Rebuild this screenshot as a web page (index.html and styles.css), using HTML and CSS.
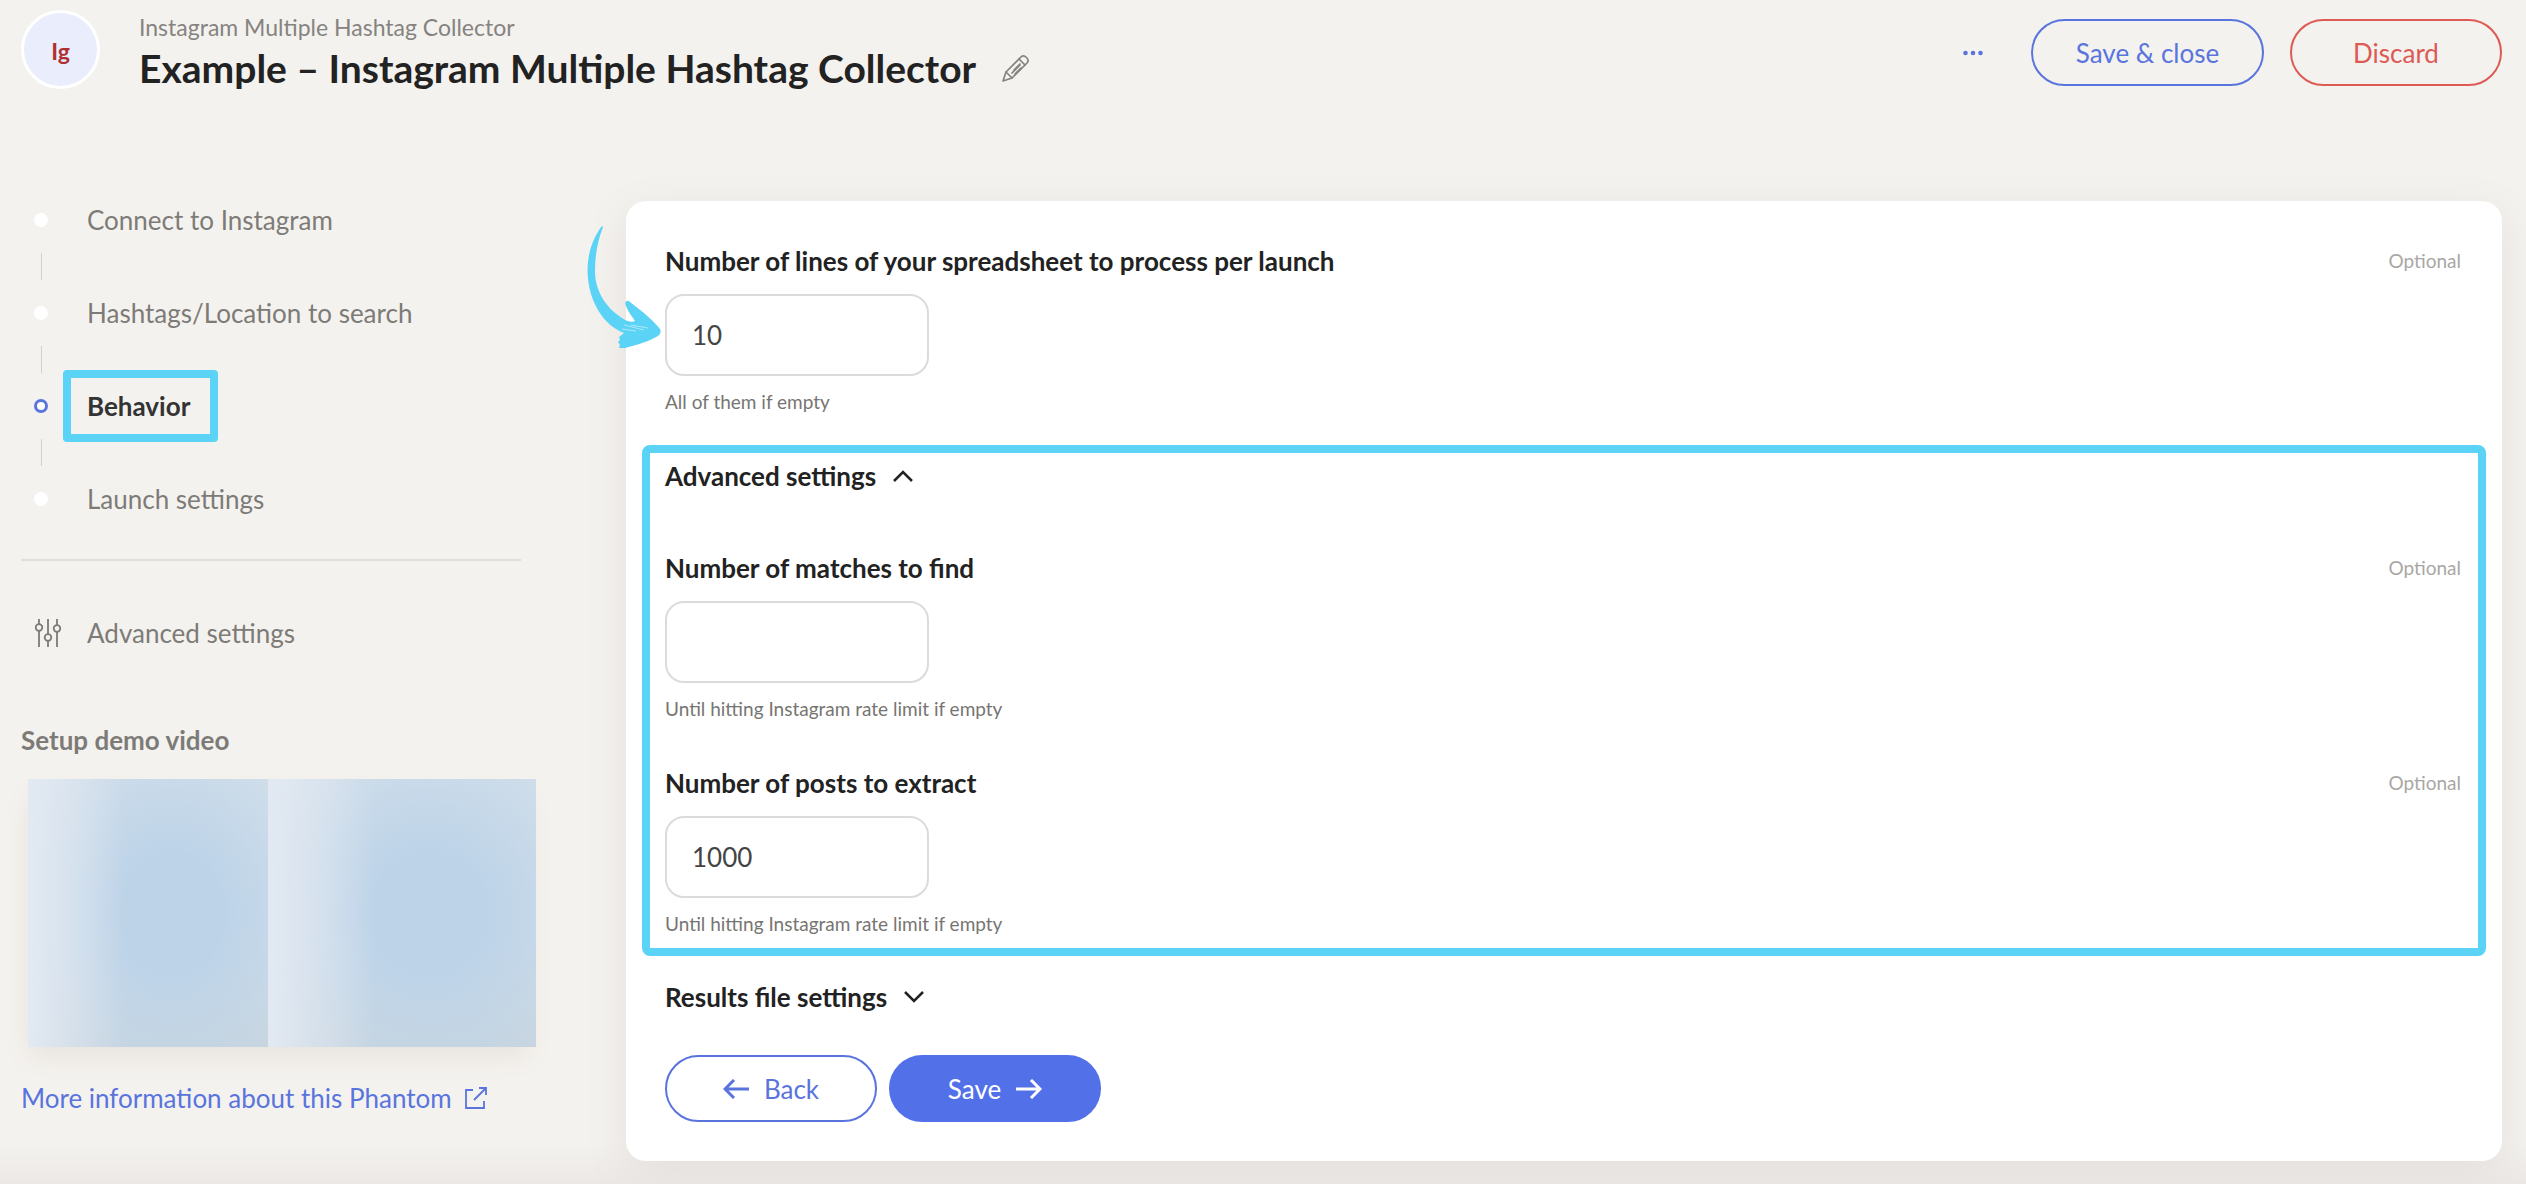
FILE: index.html
```
<!DOCTYPE html>
<html lang="en">

<head>
    <meta charset="UTF-8">
    <title>Example - Instagram Multiple Hashtag Collector</title>
    <link rel="stylesheet" href="styles.css">
</head>

<body>
    <header class="header">
        <div class="avatar">Ig</div>
        <div class="heading">
            <p class="subtitle">Instagram Multiple Hashtag Collector</p>
            <div class="title-row">
                <h1>Example – Instagram Multiple Hashtag Collector</h1>
                <button class="icon-btn" type="button" aria-label="Rename">
                    <svg width="28" height="28" viewBox="0 0 28 28" fill="none" stroke="currentColor" stroke-width="1.700" stroke-linejoin="round" stroke-linecap="round">
                        <path d="M1 27 L4 18 L19 3 Q21.500 0.500 24.500 3.500 Q27.500 6.500 25 9 L10 24 Z" />
                        <path d="M4 18 L10 24 M17 5 L23 11 M10 19 L18 11 M13 20 L19 14 M12 16 L18 10" />
                    </svg>
                </button>
            </div>
        </div>
        <div class="actions">
            <button class="icon-btn more" type="button" aria-label="More">
                <svg width="20" height="6" viewBox="0 0 20 6" fill="currentColor">
                    <circle cx="2.500" cy="3" r="2.300" />
                    <circle cx="10" cy="3" r="2.300" />
                    <circle cx="17.500" cy="3" r="2.300" />
                </svg>
            </button>
            <button class="btn btn-wide" type="button">Save &amp; close</button>
            <button class="btn btn-red" type="button">Discard</button>
        </div>
    </header>

    <div class="layout">
        <aside class="sidebar">
            <ol class="steps">
                <li><a href="#connect">Connect to Instagram</a></li>
                <li><a href="#search">Hashtags/Location to search</a></li>
                <li class="current"><a href="#behavior">Behavior</a></li>
                <li><a href="#launch">Launch settings</a></li>
            </ol>
            <a class="advanced" href="#advanced">
                <svg width="26" height="28" viewBox="0 0 26 28" fill="none" stroke="currentColor" stroke-width="1.800">
                    <path d="M4 0 V5 M4 12 V28 M13 0 V15 M13 22 V28 M22 0 V6 M22 13 V28" />
                    <circle cx="4" cy="8.500" r="3.300" />
                    <circle cx="13" cy="18.500" r="3.300" />
                    <circle cx="22" cy="9.500" r="3.300" />
                </svg>
                Advanced settings
            </a>
            <h2>Setup demo video</h2>
            <div class="video">
                <div class="half half-left"></div>
                <div class="half half-right"></div>
            </div>
            <a class="more-info" href="#info">
                More information about this Phantom
                <svg width="22" height="22" viewBox="0 0 22 22" fill="none" stroke="currentColor" stroke-width="1.800">
                    <path d="M8 3 H1 V21 H19 V14 M9 13 L20 2 M14 1 H21 V8" />
                </svg>
            </a>
        </aside>

        <main class="card">
            <svg class="arrow" width="76" height="128" viewBox="0 0 76 128" fill="#5ad3f6">
                <path d="M16 2 C5 16 0 36 2 54 C4 78 17 101 38 109 L33 113 L34 116 L32 118 L34 121 L33 124 L39 124 C51 121 64 117 72 112 Q76 109 74 105 C67 96 57 88 44 78 C41 75 38 78 40 82 C42 88 46 92 49 97 C46 99 40 97 36 94 C19 83 9 66 9 47 C9 30 12 16 17 3 Z" />
                <path d="M38 101 L58 106 M45 101 L62 104 M36 105 L50 107" stroke="#c4edf8" stroke-width="0.800" />
            </svg>

            <div class="field">
                <div class="label-row">
                    <label for="lines">Number of lines of your spreadsheet to process per launch</label>
                    <span class="optional">Optional</span>
                </div>
                <input id="lines" type="text" value="10">
                <p class="hint">All of them if empty</p>
            </div>

            <section class="highlight">
                <button class="toggle" type="button">
                    Advanced settings
                    <svg width="20" height="12" viewBox="0 0 20 12" fill="none" stroke="currentColor" stroke-width="2.500">
                        <path d="M1 11 L10 2 L19 11" />
                    </svg>
                </button>
                <div class="field">
                    <div class="label-row">
                        <label for="matches">Number of matches to find</label>
                        <span class="optional">Optional</span>
                    </div>
                    <input id="matches" type="text">
                    <p class="hint">Until hitting Instagram rate limit if empty</p>
                </div>
                <div class="field">
                    <div class="label-row">
                        <label for="posts">Number of posts to extract</label>
                        <span class="optional">Optional</span>
                    </div>
                    <input id="posts" type="text" value="1000">
                    <p class="hint">Until hitting Instagram rate limit if empty</p>
                </div>
            </section>

            <button class="toggle" type="button">
                Results file settings
                <svg width="20" height="12" viewBox="0 0 20 12" fill="none" stroke="currentColor" stroke-width="2.500">
                    <path d="M1 1 L10 10 L19 1" />
                </svg>
            </button>

            <div class="buttons">
                <button class="btn" type="button">
                    <svg width="26" height="20" viewBox="0 0 26 20" fill="none" stroke="currentColor" stroke-width="3">
                        <path d="M26 10 H3 M11 1 L2 10 L11 19" />
                    </svg>
                    Back
                </button>
                <button class="btn btn-solid" type="button">
                    Save
                    <svg width="26" height="20" viewBox="0 0 26 20" fill="none" stroke="currentColor" stroke-width="3">
                        <path d="M0 10 H23 M15 1 L24 10 L15 19" />
                    </svg>
                </button>
            </div>
        </main>
    </div>
</body>

</html>
```
FILE: styles.css
```
*,
*::before,
*::after {
    box-sizing: border-box;
}

body,
h1,
h2,
p,
ol {
    margin: 0;
    padding: 0;
}

body {
    min-height: 100vh;
    padding: 10px 24px 22px 21px;
    background: linear-gradient(to top, #ebe8e5, #f4f2ee 40px);
    color: #222;
    font: 26px/32px Lato, "Liberation Sans", sans-serif;
}

a {
    color: inherit;
    text-decoration: none;
}

button,
input {
    font: inherit;
    color: inherit;
}

svg {
    flex: none;
}

/* header */
.header {
    display: flex;
    align-items: flex-start;
    height: 191px;
}

.avatar {
    width: 79px;
    height: 79px;
    margin-right: 39px;
    border: 3px solid #fff;
    border-radius: 50%;
    background: #e9edfc;
    color: #b03030;
    font-size: 23px;
    font-weight: 700;
    line-height: 76px;
    text-align: center;
}

.subtitle {
    color: #858381;
    font-size: 23px;
    line-height: 34px;
}

.title-row {
    display: flex;
    align-items: center;
    gap: 26px;
}

h1 {
    font-size: 39px;
    line-height: 48px;
}

.icon-btn {
    display: flex;
    padding: 0;
    border: 0;
    background: none;
    color: #858381;
    cursor: pointer;
}

.actions {
    display: flex;
    align-items: center;
    gap: 26px;
    margin: 9px 0 0 auto;
}

.more {
    margin-right: 22px;
    color: #5a74de;
}

.btn {
    display: flex;
    align-items: center;
    justify-content: center;
    gap: 15px;
    width: 212px;
    height: 67px;
    border: 2px solid #5a74de;
    border-radius: 34px;
    background: none;
    color: #5a74de;
    cursor: pointer;
}

.btn-wide {
    width: 233px;
}

.btn-red {
    border-color: #dd5a55;
    color: #dd5a55;
}

.btn-solid {
    border-color: #5271e9;
    background: #5271e9;
    color: #fff;
}

/* sidebar */
.layout {
    display: flex;
    align-items: flex-start;
    gap: 90px;
}

.sidebar {
    width: 515px;
    padding-top: 3px;
    color: #7d7b78;
}

.steps {
    list-style: none;
    width: 500px;
    padding-bottom: 44px;
    border-bottom: 2px solid #dededa;
}

.steps li {
    display: grid;
    grid-template-columns: 40px 1fr;
    column-gap: 26px;
    align-items: center;
}

.steps li::before {
    content: "";
    width: 14px;
    height: 14px;
    border-radius: 50%;
    background: #fff;
    justify-self: center;
}

/* line between two steps */
.steps li:not(:last-child)::after {
    content: "";
    width: 1px;
    height: 27px;
    margin: 17px 0;
    background: #d3d1ce;
    justify-self: center;
}

.steps .current::before {
    border: 3px solid #5a74de;
}

.steps .current a {
    justify-self: start;
    margin: -20px -24px;
    padding: 12px 20px 12px 16px;
    border: 8px solid #5ad3f6;
    border-radius: 4px;
    color: #333;
    font-weight: 700;
}

.advanced {
    display: flex;
    align-items: center;
    gap: 26px;
    margin: 56px 0 75px 14px;
}

h2 {
    margin-bottom: 23px;
    font-size: 26px;
    line-height: 32px;
}

.video {
    display: flex;
    height: 268px;
    margin-left: 7px;
    box-shadow: -4px 14px 24px -6px #e6e1dd;
}

.half {
    background:
        linear-gradient(to right, #e2e9f2, rgba(226, 233, 242, 0) 40%),
        radial-gradient(ellipse 75% 80% at 60% 50%, #bcd3e8 25%, rgba(188, 211, 232, 0)),
        linear-gradient(#d6e1eb, #d4dfe9 60%, #ccd6dd);
}

.half-left {
    flex: 240;
}

.half-right {
    flex: 268;
}

.more-info {
    display: flex;
    align-items: center;
    gap: 13px;
    margin-top: 35px;
    color: #5a74de;
}

/* form */
.card {
    position: relative;
    flex: 1;
    padding: 44px 41px 39px 39px;
    border-radius: 20px;
    background: #fff;
    box-shadow: 0 12px 40px #e3dfdc;
}

.arrow {
    position: absolute;
    top: 23px;
    left: -40px;
}

.label-row {
    display: flex;
    justify-content: space-between;
    font-weight: 700;
}

.optional {
    color: #a9a7a5;
    font-size: 19px;
    font-weight: 400;
}

.field input {
    display: block;
    width: 264px;
    height: 82px;
    margin: 17px 0 10px;
    padding: 0 25px;
    border: 2px solid #dddbd9;
    border-radius: 19px;
    background: #fff;
    color: #444;
    outline: 0;
}

.hint {
    color: #777572;
    font-size: 19px;
}

.toggle {
    display: flex;
    align-items: center;
    gap: 17px;
    padding: 0;
    border: 0;
    background: none;
    font-weight: 700;
    cursor: pointer;
}

.highlight {
    margin: 27px -25px 25px -23px;
    padding: 7px 17px 8px 15px;
    border: 8px solid #5ad3f6;
    border-radius: 8px;
}

.highlight .toggle {
    margin-bottom: 60px;
}

.highlight .field + .field {
    margin-top: 42px;
}

.buttons {
    display: flex;
    gap: 12px;
    margin-top: 42px;
}
```
